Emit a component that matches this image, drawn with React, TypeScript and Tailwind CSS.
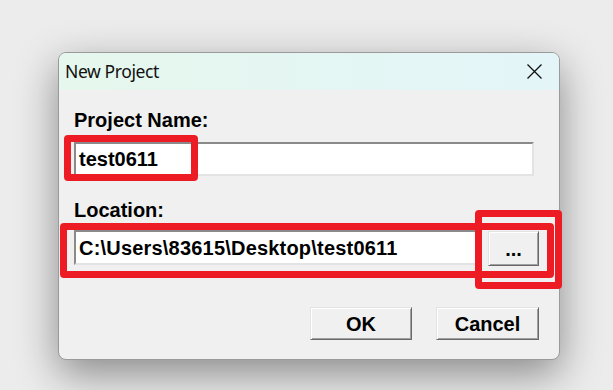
import React from "react";

const sunken =
  "bg-white border-2 border-t-[#8a8a8a] border-l-[#8a8a8a] border-b-[#e3e3e3] border-r-[#e3e3e3] flex items-center";
const raised =
  "bg-[#f0f0f0] border border-t-[#e3e3e3] border-l-[#e3e3e3] border-r-[#696969] border-b-[#696969] shadow-[inset_1px_1px_0_#ffffff,inset_-1px_-1px_0_#a0a0a0] flex items-center justify-center text-black";

export default function App() {
  return (
    <div className="w-[613px] h-[390px] overflow-hidden bg-[#ececec] pt-[52px] pl-[58px]">
      <div
        className="relative w-[502px] h-[308px] rounded-[8px] border border-[#9a9a9a] bg-[#f0f0f0] shadow-[0_14px_42px_rgba(0,0,0,0.42)]"
        style={{ fontFamily: '"Liberation Sans", Arial, sans-serif' }}
      >
        {/* Title bar */}
        <div className="h-[37px] rounded-t-[7px] bg-gradient-to-r from-[#e6f7ed] to-[#e3f5f8] flex items-center justify-between pl-[6px] pr-[17px]">
          <span
            className="text-[17.5px] text-[#111] tracking-[-0.4px]"
            style={{ fontFamily: '"Noto Sans", "Open Sans", sans-serif' }}
          >
            New Project
          </span>
          <svg width="15" height="15" viewBox="0 0 15 15" className="mt-[-1px]">
            <path d="M0.5 0.5 L14.5 14.5 M14.5 0.5 L0.5 14.5" stroke="#111" strokeWidth="1.3" fill="none" />
          </svg>
        </div>

        {/* Body */}
        <div className="pl-[15px] pt-[20px] flex flex-col font-bold text-[20px] leading-[20px] text-black">
          <div className="h-[20px]">Project Name:</div>
          <div className={`mt-[12px] w-[460px] h-[34px] pl-[3px] ${sunken}`}>test0611</div>

          <div className="mt-[24px] h-[20px]">Location:</div>
          <div className="mt-[10px] flex items-start gap-[7px]">
            <div className={`w-[407px] h-[35px] pl-[3px] tracking-[0.2px] ${sunken}`}>C:\Users\83615\Desktop\test0611</div>
            <button className={`mt-[1px] w-[51px] h-[35px] ${raised} font-bold text-[20px] leading-[20px]`}>
              ...
            </button>
          </div>

          <div className="mt-[41px] flex justify-end gap-[24px] pr-[20px]">
            <button className={`w-[102px] h-[33px] ${raised} font-bold text-[20px]`}>OK</button>
            <button className={`w-[103px] h-[33px] ${raised} font-bold text-[20px]`}>Cancel</button>
          </div>
        </div>

        {/* Red annotation boxes */}
        <div className="absolute left-[5px] top-[82px] w-[134px] h-[46px] border-[7px] border-[#ed1c24] rounded-[4px]" />
        <div className="absolute left-[1px] top-[170px] w-[494px] h-[55px] border-[7px] border-[#ed1c24] rounded-[4px]" />
        <div className="absolute left-[416px] top-[157px] w-[87px] h-[79px] border-[7px] border-[#ed1c24] rounded-[4px]" />
      </div>
    </div>
  );
}
